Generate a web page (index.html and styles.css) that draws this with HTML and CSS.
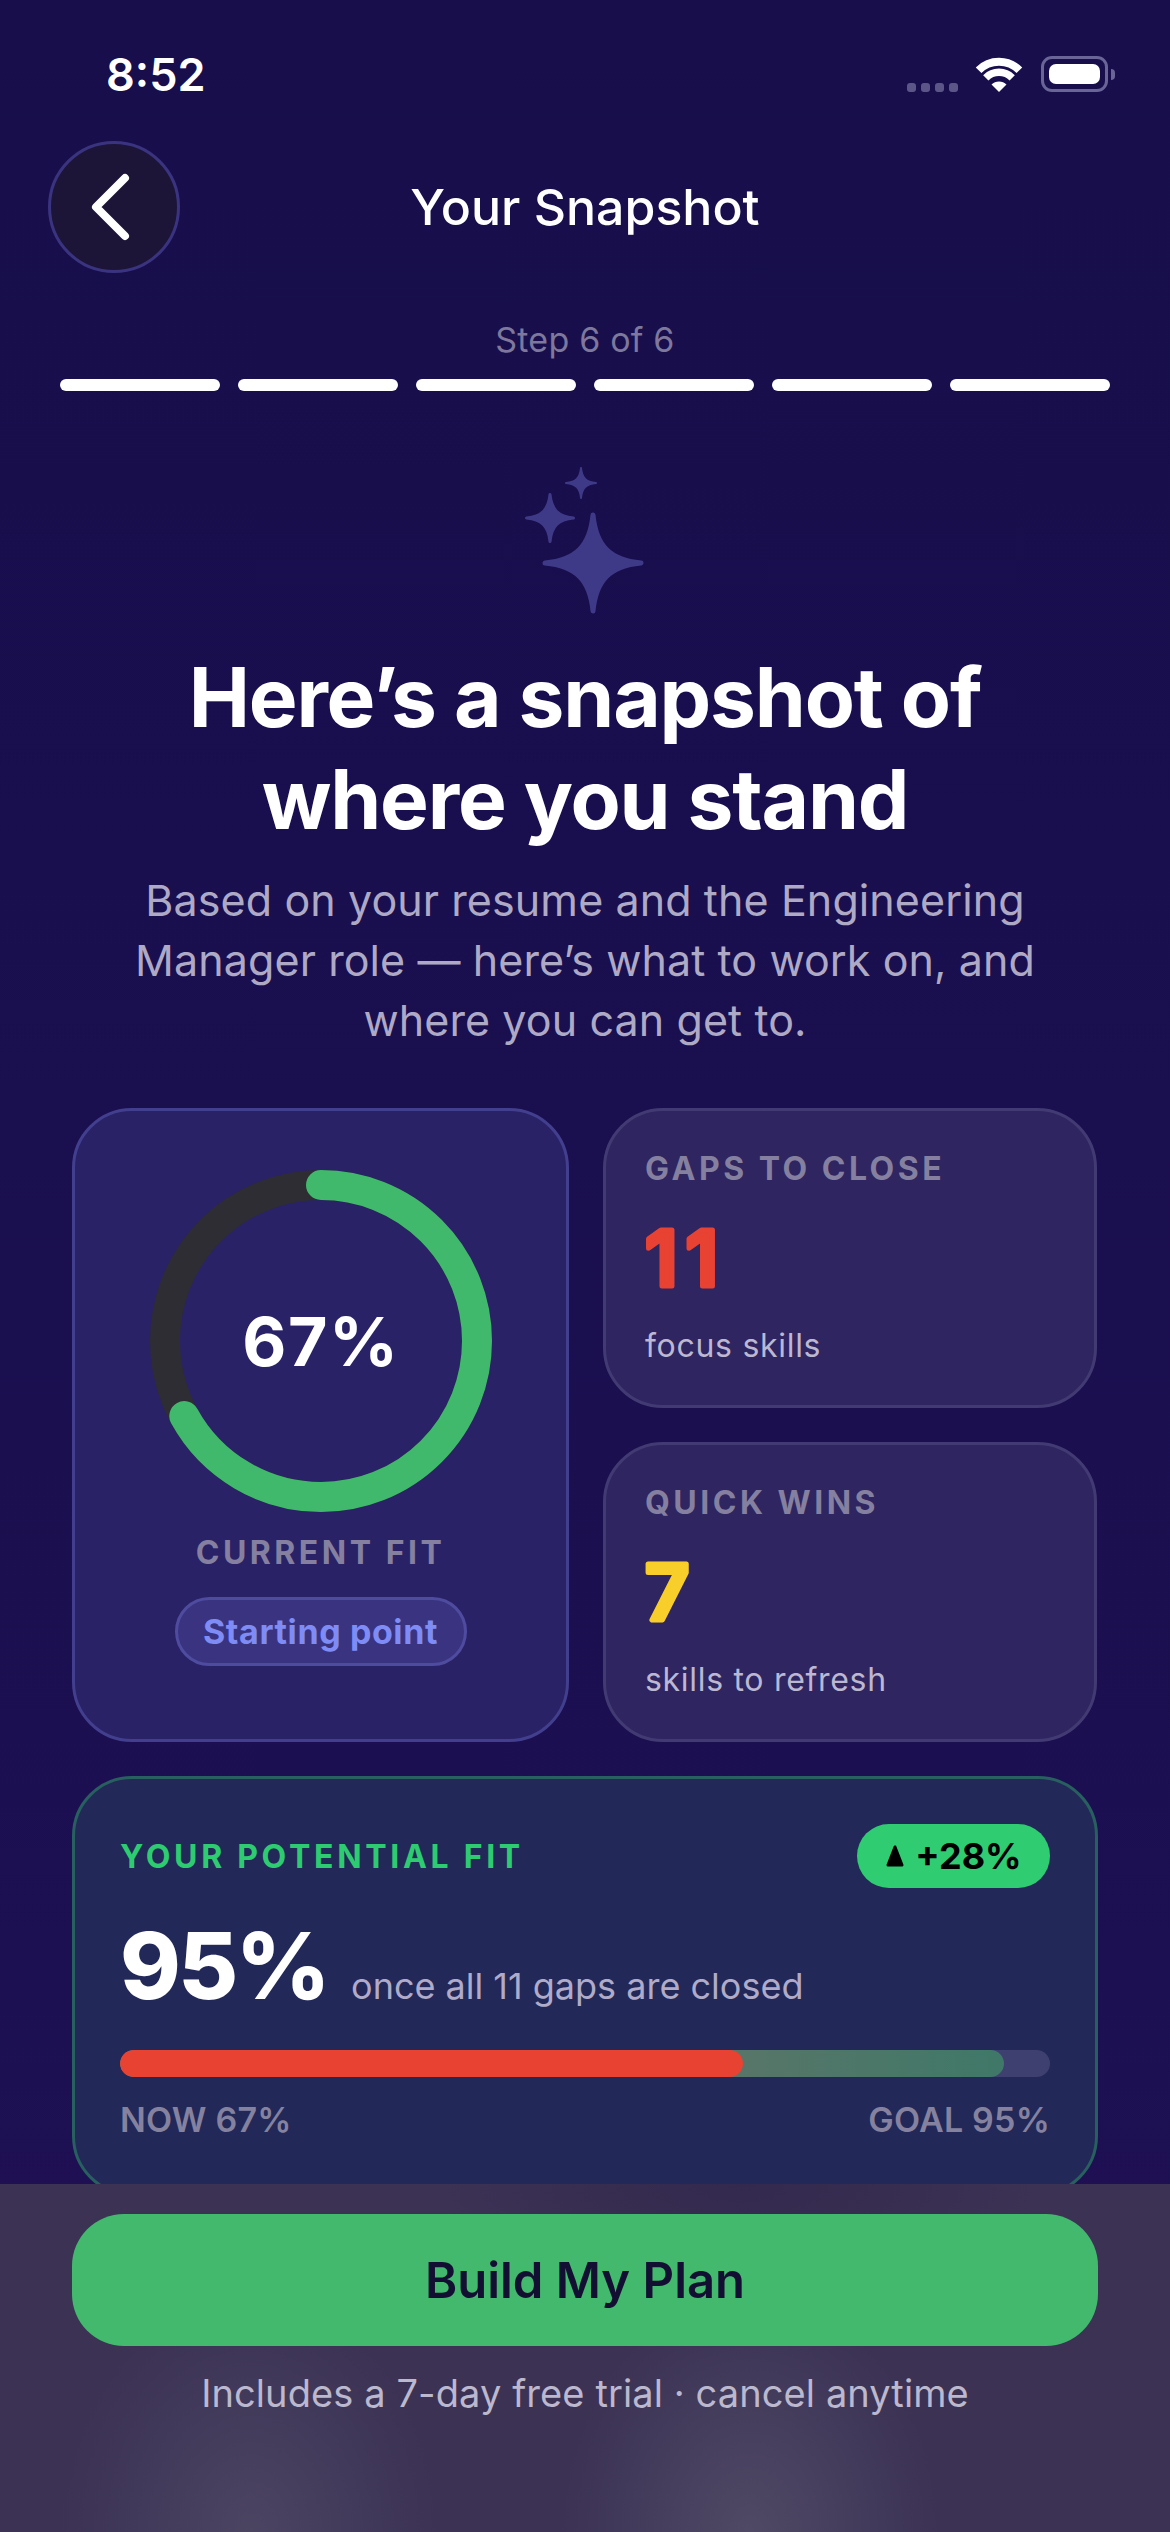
FILE: index.html
```html
<!DOCTYPE html>
<html>
  <head>
    <title>Your Snapshot</title>
    <link rel="stylesheet" href="styles.css">
  </head>
  <body>
    <div class="screen">
      <div class="status">
        <span class="time">8:52</span>
        <div class="status-icons">
          <div class="signal"><i></i><i></i><i></i><i></i></div>
          <svg class="wifi" width="48" height="36" viewBox="0 0 48 36">
            <path d="M24 36L16.5 28.5A10.6 10.6 0 0 1 31.5 28.5Z" fill="#fff" />
            <path d="M10.8 21.8A18.7 18.7 0 0 1 37.2 21.8" fill="none" stroke="#fff" stroke-width="7.5" />
            <path d="M3.6 14.2A28.8 28.8 0 0 1 44.4 14.2" fill="none" stroke="#fff" stroke-width="8" />
          </svg>
          <div class="battery"><div class="battery-level"></div></div>
          <div class="battery-nub"></div>
        </div>
      </div>

      <div class="nav">
        <div class="back-btn">
          <svg width="44" height="70" viewBox="0 0 44 70">
            <path d="M37 6L8 35L37 64" fill="none" stroke="#fff" stroke-width="8" stroke-linecap="round" stroke-linejoin="round" />
          </svg>
        </div>
        <div class="nav-title">Your Snapshot</div>
      </div>

      <div class="step-label">Step 6 of 6</div>
      <div class="steps">
        <div class="step"></div>
        <div class="step"></div>
        <div class="step"></div>
        <div class="step"></div>
        <div class="step"></div>
        <div class="step"></div>
      </div>

      <svg class="sparkles" width="120" height="147" viewBox="0 0 120 147">
        <path d="M69 48C72 79 86 93 117 96C86 99 72 113 69 144C66 113 52 99 21 96C52 93 66 79 69 48Z" fill="#3f3a88" stroke="#3f3a88" stroke-width="5" stroke-linejoin="round" />
        <path d="M26 27.5C27.5 43 34.5 49.5 49.5 51C34.5 52.5 27.5 59 26 74.5C24.5 59 17.5 52.5 2.5 51C17.5 49.5 24.5 43 26 27.5Z" fill="#3f3a88" stroke="#3f3a88" stroke-width="3" stroke-linejoin="round" />
        <path d="M57 1C58 11 62 15 72 16C62 17 58 21 57 31C56 21 52 17 42 16C52 15 56 11 57 1Z" fill="#3f3a88" stroke="#3f3a88" stroke-width="2" stroke-linejoin="round" />
      </svg>

      <h1 class="headline">Here’s a snapshot of<br />where you stand</h1>
      <p class="intro">Based on your resume and the Engineering<br />Manager role — here’s what to work on, and<br />where you can get to.</p>

      <div class="stats">
        <div class="card card-fit">
          <svg class="ring" width="342" height="342" viewBox="0 0 342 342">
            <circle cx="171" cy="171" r="156" fill="none" stroke="#2d2d33" stroke-width="30" />
            <circle cx="171" cy="171" r="156" fill="none" stroke="#41b96c" stroke-width="30" stroke-linecap="round" pathLength="100" stroke-dasharray="67 100" transform="rotate(-90 171 171)" />
            <text class="ring-text" x="171" y="171" text-anchor="middle" dominant-baseline="central">67%</text>
          </svg>
          <div class="label fit-label">CURRENT FIT</div>
          <div class="pill">Starting point</div>
        </div>
        <div class="card card-stat">
          <div class="label">GAPS TO CLOSE</div>
          <svg class="stat-num" width="200" height="90"><text class="red" x="0" y="79">11</text></svg>
          <div class="stat-note">focus skills</div>
        </div>
        <div class="card card-stat">
          <div class="label">QUICK WINS</div>
          <svg class="stat-num" width="200" height="90"><text class="yellow" x="0" y="79">7</text></svg>
          <div class="stat-note">skills to refresh</div>
        </div>
      </div>

      <div class="potential">
        <div class="potential-top">
          <div class="potential-label">YOUR POTENTIAL FIT</div>
          <div class="badge">
            <svg width="20" height="22" viewBox="0 0 20 22"><path d="M10 2L17 20H3Z" fill="#000" stroke="#000" stroke-width="3" stroke-linejoin="round" /></svg>
            <span>+28%</span>
          </div>
        </div>
        <div class="potential-main">
          <span class="potential-num">95%</span>
          <span class="potential-note">once all 11 gaps are closed</span>
        </div>
        <div class="bar">
          <div class="bar-goal"></div>
          <div class="bar-now"></div>
        </div>
        <div class="bar-labels">
          <span>NOW 67%</span>
          <span>GOAL 95%</span>
        </div>
      </div>

      <div class="footer">
        <div class="cta">Build My Plan</div>
        <div class="footnote">Includes a 7-day free trial · cancel anytime</div>
      </div>
    </div>
  </body>
</html>
```

FILE: styles.css
```css
* {
  box-sizing: border-box;
}
body,
html {
  margin: 0;
  padding: 0;
}
.screen {
  position: relative;
  width: 1170px;
  height: 2532px;
  overflow: hidden;
  background: linear-gradient(180deg, #170e4b 0%, #1e1054 100%);
  font-family: Inter, "Liberation Sans", sans-serif;
  color: #fff;
}

/* status bar */
.status {
  height: 110px;
  padding: 38px 55px 0 106px;
  display: flex;
  justify-content: space-between;
  align-items: center;
}
.time {
  font-size: 45px;
  font-weight: 600;
}
.status-icons {
  display: flex;
  align-items: center;
  height: 36px;
}
.signal {
  display: flex;
  gap: 5px;
  align-self: flex-end;
  margin-right: 17px;
}
.signal i {
  display: block;
  width: 9px;
  height: 9px;
  border-radius: 3px;
  background: #5c5688;
}
.wifi {
  display: block;
  margin-right: 18px;
}
.battery {
  width: 67px;
  height: 36px;
  padding: 5px;
  border: 3px solid #6a6597;
  border-radius: 11px;
}
.battery-level {
  height: 100%;
  background: #fff;
  border-radius: 7px;
}
.battery-nub {
  width: 4px;
  height: 11px;
  margin-left: 3px;
  background: #6a6597;
  border-radius: 0 4px 4px 0;
}

/* nav */
.nav {
  position: relative;
  margin-top: 31px;
  height: 132px;
  display: flex;
  align-items: center;
  justify-content: center;
}
.back-btn {
  position: absolute;
  left: 48px;
  top: 0;
  width: 132px;
  height: 132px;
  border-radius: 50%;
  background: #1c1538;
  border: 3px solid #3a3480;
  display: flex;
  align-items: center;
  justify-content: center;
}
.back-btn svg {
  margin-right: 8px;
}
.nav-title {
  font-size: 50px;
  font-weight: 500;
}

/* steps */
.step-label {
  margin-top: 47px;
  line-height: 40px;
  text-align: center;
  font-size: 34px;
  letter-spacing: 0.2px;
  color: #7d789c;
}
.steps {
  margin-top: 19px;
  padding: 0 60px;
  display: flex;
  gap: 18px;
}
.step {
  flex: 1;
  height: 12px;
  border-radius: 6px;
  background: #fff;
}

.sparkles {
  display: block;
  margin: 76px auto 0;
  transform: translateX(-1px);
}

.headline {
  margin: 33px 0 0;
  text-align: center;
  font-size: 82px;
  line-height: 102px;
  font-weight: 700;
  letter-spacing: -1.2px;
}
.intro {
  margin: 19px 0 0;
  text-align: center;
  font-size: 43px;
  line-height: 60px;
  letter-spacing: 0.1px;
  color: #aeaac6;
}

/* stat cards */
.stats {
  margin: 58px 73px 0 72px;
  display: grid;
  grid-template-columns: 497px 1fr;
  grid-template-rows: 300px 300px;
  gap: 34px;
}
.card {
  border-radius: 60px;
  border: 3px solid #433f8f;
}
.card-fit {
  grid-row: 1 / 3;
  background: #2a2266;
  padding-top: 59px;
  display: flex;
  flex-direction: column;
  align-items: center;
}
.ring {
  display: block;
}
.ring-text {
  font-size: 68px;
  font-weight: 700;
  letter-spacing: 1.5px;
  fill: #fff;
}
.label {
  font-size: 32px;
  font-weight: 700;
  letter-spacing: 3.5px;
  line-height: 40px;
  color: #85809f;
}
.fit-label {
  margin-top: 21px;
}
.pill {
  margin-top: 24px;
  height: 69px;
  width: 292px;
  border-radius: 35px;
  background: #3a3480;
  border: 3px solid #4f4ca0;
  display: flex;
  align-items: center;
  justify-content: center;
  font-size: 34px;
  font-weight: 700;
  letter-spacing: 0.6px;
  color: #7f8cf5;
}
.card-stat {
  background: #2f2560;
  border-color: #423b73;
  padding: 38px 0 0 39px;
}
.stat-num {
  display: block;
  margin-top: 18px;
  overflow: visible;
}
.stat-num text {
  font-size: 77px;
  font-weight: 600;
  letter-spacing: 8px;
  stroke-width: 5px;
  stroke-linejoin: round;
}
.red {
  fill: #e84233;
  stroke: #e84233;
}
.yellow {
  fill: #f8cf2a;
  stroke: #f8cf2a;
}
.stat-note {
  margin-top: 29px;
  font-size: 32px;
  line-height: 40px;
  letter-spacing: 0.7px;
  color: #bcb8d2;
}

/* potential fit */
.potential {
  margin: 34px 72px 0;
  height: 420px;
  border-radius: 60px;
  background: #222858;
  border: 3px solid #27605f;
  padding: 45px 45px 0 45px;
}
.potential-top {
  display: flex;
  justify-content: space-between;
  align-items: center;
}
.potential-label {
  font-size: 32px;
  font-weight: 700;
  letter-spacing: 3.7px;
  color: #2ecc71;
}
.badge {
  width: 193px;
  height: 64px;
  border-radius: 32px;
  background: #2fcc71;
  color: #000;
  font-size: 36px;
  font-weight: 700;
  display: flex;
  align-items: center;
  justify-content: center;
  gap: 10px;
}
.potential-main {
  margin-top: 22px;
  display: flex;
  align-items: baseline;
  gap: 23px;
}
.potential-num {
  font-size: 92px;
  line-height: 112px;
  font-weight: 800;
  letter-spacing: -2.5px;
}
.potential-note {
  font-size: 36px;
  color: #b0abc8;
}
.bar {
  position: relative;
  margin-top: 28px;
  height: 27px;
  border-radius: 14px;
  background: #3e4070;
  overflow: hidden;
}
.bar-goal {
  width: 95%;
  height: 100%;
  border-radius: 14px;
  background: linear-gradient(90deg, #5f7568 60%, #3f7868 100%);
}
.bar-now {
  position: absolute;
  left: 0;
  top: 0;
  width: 67%;
  height: 100%;
  border-radius: 14px;
  background: #e84233;
}
.bar-labels {
  margin-top: 23px;
  display: flex;
  justify-content: space-between;
  font-size: 34px;
  line-height: 40px;
  font-weight: 600;
  letter-spacing: 0.2px;
  color: #85829f;
}

/* sticky footer */
.footer {
  position: absolute;
  left: 0;
  right: 0;
  top: 2184px;
  bottom: 0;
  padding: 30px 72px 0;
  background:
    radial-gradient(ellipse 190px 240px at 250px 348px, rgba(100, 96, 118, 0.4), transparent),
    radial-gradient(ellipse 190px 240px at 750px 348px, rgba(100, 96, 118, 0.5), transparent),
    radial-gradient(ellipse 300px 110px at 740px 0, rgba(46, 34, 74, 0.6), transparent),
    #3b3254;
}
.cta {
  height: 132px;
  border-radius: 52px;
  background: #43b96e;
  color: #130f33;
  font-size: 49px;
  font-weight: 600;
  display: flex;
  align-items: center;
  justify-content: center;
}
.footnote {
  margin-top: 24px;
  text-align: center;
  font-size: 38px;
  line-height: 46px;
  letter-spacing: 0.1px;
  color: #bcb8ce;
}
```
